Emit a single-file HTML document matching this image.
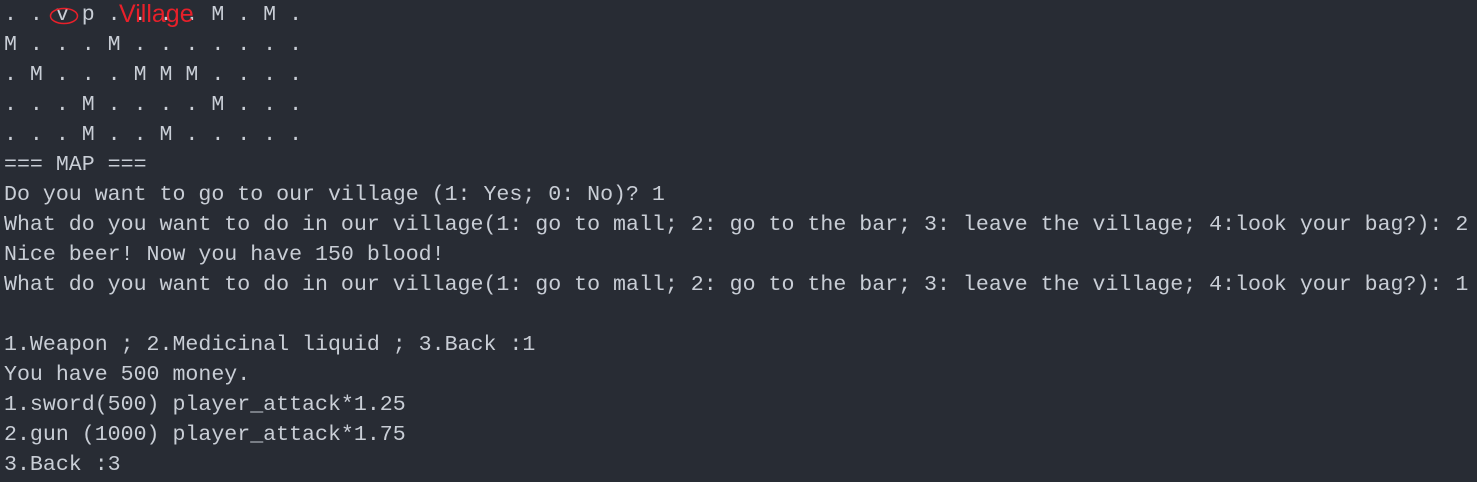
<!DOCTYPE html>
<html><head><style>
body{margin:0;background:#282c34;width:1477px;height:482px;overflow:hidden;position:relative}
pre{margin:0;position:absolute;left:4px;top:0;font-family:"Liberation Mono",monospace;font-size:21.6px;line-height:30px;color:#c9ced6;white-space:pre}
.vl{position:absolute;left:119px;top:-1px;font-family:"Liberation Sans",sans-serif;font-size:25px;color:#e8202a;line-height:30px}
</style></head><body>
<pre>. . v p . . . . M . M .
M . . . M . . . . . . .
. M . . . M M M . . . .
. . . M . . . . M . . .
. . . M . . M . . . . .
=== MAP ===
Do you want to go to our village (1: Yes; 0: No)? 1
What do you want to do in our village(1: go to mall; 2: go to the bar; 3: leave the village; 4:look your bag?): 2
Nice beer! Now you have 150 blood!
What do you want to do in our village(1: go to mall; 2: go to the bar; 3: leave the village; 4:look your bag?): 1

1.Weapon ; 2.Medicinal liquid ; 3.Back :1
You have 500 money.
1.sword(500) player_attack*1.25
2.gun (1000) player_attack*1.75
3.Back :3</pre>
<svg style="position:absolute;left:48px;top:5px" width="32" height="22"><ellipse cx="16" cy="11" rx="13.5" ry="7.5" fill="none" stroke="#e8202a" stroke-width="1.5"/></svg>
<div class="vl">Village</div>
</body></html>
